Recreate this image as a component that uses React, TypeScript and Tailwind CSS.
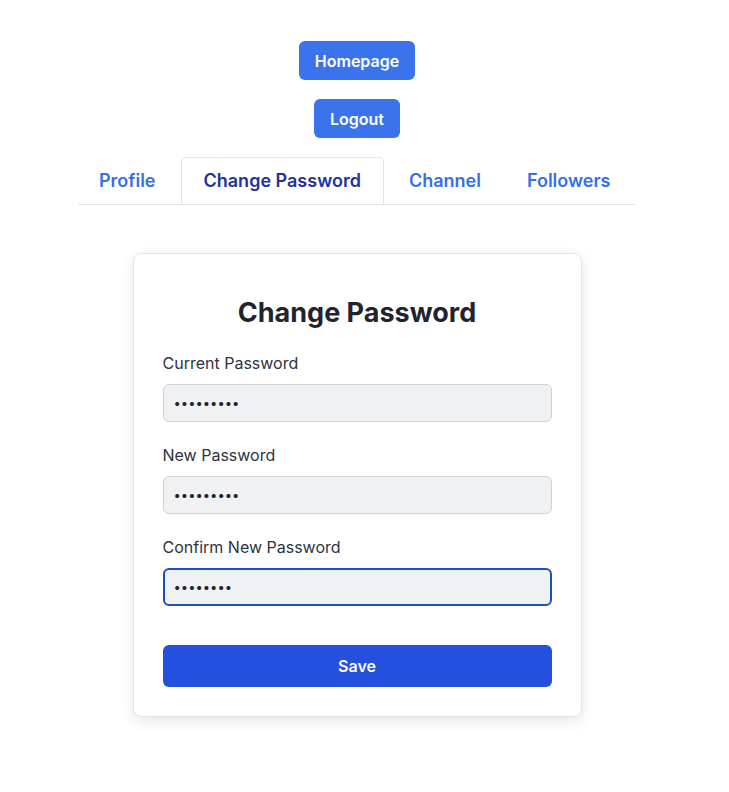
import { useState } from "react";

const tabs = ["Profile", "Change Password", "Channel", "Followers"];

function Field({
  label,
  value,
  focused,
}: {
  label: string;
  value: string;
  focused?: boolean;
}) {
  const [val, setVal] = useState(value);
  return (
    <div className="flex flex-col">
      <label className="text-base leading-6 text-[#2d3340] mb-[9px]">{label}</label>
      <input
        type="password"
        value={val}
        autoFocus={focused}
        onChange={(e) => setVal(e.target.value)}
        className={
          focused
            ? "h-[38px] w-full rounded-md bg-[#f0f1f3] px-[9px] text-[13px] text-[#1f2430] border-2 border-[#1c4fc4] outline-none"
            : "h-[38px] w-full rounded-md bg-[#f0f1f3] px-[10px] text-[13px] text-[#1f2430] border border-[#cfd2d8] outline-none"
        }
      />
    </div>
  );
}

export default function App() {
  const [active, setActive] = useState("Change Password");

  return (
    <div
      className="min-h-screen bg-white flex flex-col items-center pt-[41px] pr-[15px]"
      style={{ fontFamily: "Inter, 'Noto Sans', sans-serif" }}
    >
      <div className="flex flex-col items-center gap-[19px]">
        <button className="h-[39px] px-4 rounded-md bg-[#3b73ed] text-white text-base font-semibold">
          Homepage
        </button>
        <button className="h-[39px] px-4 rounded-md bg-[#3b73ed] text-white text-base font-semibold">
          Logout
        </button>
      </div>

      <div className="mt-[19px] w-[558px] flex gap-1 border-b border-[#e3e4e8]">
        {tabs.map((t) =>
          t === active ? (
            <button
              key={t}
              onClick={() => setActive(t)}
              className="shrink-0 whitespace-nowrap h-[48px] px-[22px] -mb-px rounded-t-sm border border-[#e3e4e8] bg-white text-lg font-semibold text-[#23329b]"
            >
              {t}
            </button>
          ) : (
            <button
              key={t}
              onClick={() => setActive(t)}
              className="shrink-0 whitespace-nowrap h-[48px] px-[20px] -mb-px border border-transparent text-lg font-semibold text-[#3570e8]"
            >
              {t}
            </button>
          )
        )}
      </div>

      <div className="mt-[48px] w-[449px] rounded-lg border border-[#e3e4e8] bg-white p-[29px] shadow-[0_4px_14px_rgba(0,0,0,0.1)]">
        <h2 className="mt-[14px] text-center text-[27px] leading-8 font-bold text-[#1f2430]">
          Change Password
        </h2>
        <div className="mt-[22px] flex flex-col gap-[21px]">
          <Field label="Current Password" value="123456789" />
          <Field label="New Password" value="123456789" />
          <Field label="Confirm New Password" value="12345678" focused />
        </div>
        <button className="mt-[39px] h-[42px] w-full rounded-md bg-[#2450e0] text-white text-base font-semibold">
          Save
        </button>
      </div>
    </div>
  );
}
